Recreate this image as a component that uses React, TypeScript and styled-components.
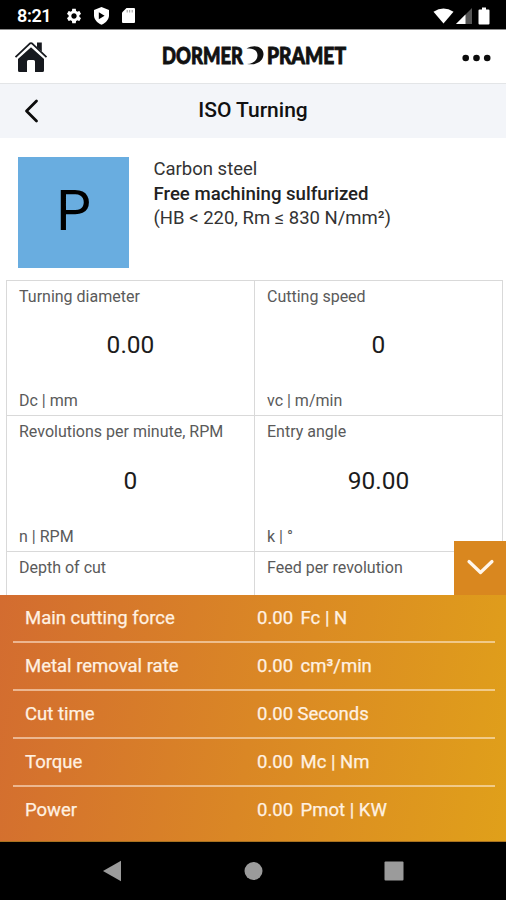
import React from 'react';
import styled, { createGlobalStyle } from 'styled-components';

const GlobalStyle = createGlobalStyle`
  *, *::before, *::after { box-sizing: border-box; }
  body { margin: 0; background: #fff; font-family: Roboto, "Liberation Sans", sans-serif; }
  svg { display: block; flex: none; overflow: visible; }
`;

const Screen = styled.div`
  width: 506px;
  height: 900px;
  display: flex;
  flex-direction: column;
  overflow: hidden;
  background: #fff;
  color: #111;
`;

const StatusBar = styled.div`
  height: 30px;
  flex: none;
  display: flex;
  align-items: center;
  justify-content: space-between;
  padding: 2px 16px 0 17px;
  background: #000;
  border-bottom: 1px solid #8c8c8c;
  color: #fff;
`;

const StatusGroup = styled.div<{ $gap: number }>`
  display: flex;
  align-items: center;
  gap: ${(p) => p.$gap}px;
`;

const Clock = styled.span`
  width: 35px;
  font-size: 18px;
  font-weight: 600;
  line-height: 22px;
  letter-spacing: -0.4px;
  margin-right: 3px;
`;

const Header = styled.header`
  height: 54px;
  flex: none;
  display: flex;
  align-items: center;
  justify-content: space-between;
  padding: 0 14px;
  border-bottom: 1px solid #e3e5e7;
`;

const TitleBar = styled.div`
  height: 54px;
  flex: none;
  display: grid;
  grid-template-columns: 60px 1fr 60px;
  align-items: center;
  padding: 0 0 1px;
  background: #f3f5f9;
`;

const BackButton = styled.div`
  padding-left: 22px;
`;

const Title = styled.h1`
  margin: 0;
  padding-bottom: 1px;
  text-align: center;
  font-size: 21px;
  font-weight: 500;
  line-height: 24px;
  color: #111;
`;

const Material = styled.section`
  height: 142px;
  flex: none;
  display: flex;
  align-items: flex-start;
  gap: 24.5px;
  padding: 19px 0 0 18px;
`;

const MaterialBadge = styled.div`
  width: 111px;
  height: 111px;
  display: flex;
  align-items: center;
  justify-content: center;
  padding-bottom: 3px;
  background: #69ade0;
  font-size: 55px;
  line-height: 56px;
  color: #000;
`;

const MaterialText = styled.div`
  display: flex;
  flex-direction: column;
`;

const MaterialLine = styled.span<{ $strong?: boolean }>`
  font-size: ${(p) => (p.$strong ? 18.6 : 18.5)}px;
  line-height: 24.5px;
  font-weight: ${(p) => (p.$strong ? 500 : 400)};
  color: ${(p) => (p.$strong ? '#222' : '#333')};
  white-space: nowrap;
`;

const Fields = styled.section`
  height: 315px;
  flex: none;
  overflow: hidden;
  display: grid;
  grid-template-columns: 248px 248px;
  grid-template-rows: 135px 136px 43px;
  width: 497px;
  margin-left: 6px;
  border-top: 1px solid #d9d9d9;
  border-left: 1px solid #d9d9d9;
`;

const FieldCell = styled.div`
  display: flex;
  flex-direction: column;
  justify-content: space-between;
  padding: 6px 12px 4px;
  border-right: 1px solid #d9d9d9;
  border-bottom: 1px solid #d9d9d9;

  &:nth-last-child(-n + 2) { border-bottom: none; }
`;

const FieldLabel = styled.span`
  font-size: 16px;
  line-height: 20px;
  color: #5a5a5a;
  white-space: nowrap;
`;

const FieldValue = styled.span`
  text-align: center;
  font-size: 24.5px;
  line-height: 30px;
  color: #1c1c1c;
  margin-bottom: 8px;
`;

const Results = styled.section`
  position: relative;
  height: 247px;
  flex: none;
  padding: 0 11px 0 13px;
  background: linear-gradient(100deg, #d36c30 0%, #da8725 50%, #e0a01a 100%);
  border-bottom: 1px solid #a87220;
`;

const CollapseButton = styled.div`
  position: absolute;
  right: 0;
  top: -54px;
  width: 52px;
  height: 54px;
  display: flex;
  align-items: center;
  justify-content: center;
  padding-bottom: 2px;
  background: #d9871f;
`;

const ResultRow = styled.div`
  height: 48px;
  display: grid;
  grid-template-columns: 232px 1fr;
  align-items: center;
  padding: 0 0 0 12px;
  border-bottom: 2px solid rgba(255, 240, 225, 0.55);
  font-size: 18.5px;
  line-height: 24px;
  color: #fff1e2;
  -webkit-text-stroke: 0.25px #fff1e2;

  &:last-child { border-bottom-color: transparent; }
`;

const Reading = styled.span<{ $gap: number }>`
  display: flex;
  gap: ${(p) => p.$gap}px;
`;

const NavBar = styled.nav`
  height: 58px;
  flex: none;
  display: flex;
  align-items: center;
  justify-content: space-between;
  padding: 0 102.5px 0 102px;
  background: #000;
`;

const GearIcon = () => (
  <svg width="18" height="18" viewBox="0 0 24 24" fill="#fff">
    <path d="M19.14 12.94c.04-.3.06-.61.06-.94s-.02-.64-.07-.94l2.03-1.58c.18-.14.23-.41.12-.61l-1.92-3.32c-.12-.22-.37-.29-.59-.22l-2.39.96c-.5-.38-1.03-.7-1.62-.94l-.36-2.54c-.04-.24-.24-.41-.48-.41h-3.84c-.24 0-.43.17-.47.41l-.36 2.54c-.59.24-1.13.57-1.62.94l-2.39-.96c-.22-.08-.47 0-.59.22L2.74 8.87c-.12.21-.08.47.12.61l2.03 1.58c-.05.3-.09.63-.09.94s.02.64.07.94l-2.03 1.58c-.18.14-.23.41-.12.61l1.92 3.32c.12.22.37.29.59.22l2.39-.96c.5.38 1.03.7 1.62.94l.36 2.54c.05.24.24.41.48.41h3.84c.24 0 .44-.17.47-.41l.36-2.54c.59-.24 1.13-.56 1.62-.94l2.39.96c.22.08.47 0 .59-.22l1.92-3.32c.12-.22.07-.47-.12-.61l-2.01-1.58zM12 15.6c-1.98 0-3.6-1.62-3.6-3.6s1.62-3.6 3.6-3.6 3.6 1.62 3.6 3.6-1.62 3.6-3.6 3.6z" />
  </svg>
);

const ShieldIcon = () => (
  <svg width="17" height="18" viewBox="0 0 17 18">
    <path d="M8.5 0 16 3v5.2c0 4-3 7.700-7.500 9.500C4 15.900 1 12.200 1 8.200V3z" fill="#fff" />
    <path d="M5.800 5.200v7l5.800-3.500z" fill="#000" />
  </svg>
);

const SdCardIcon = () => (
  <svg width="16" height="17" viewBox="-1 0 15 17">
    <path d="M5 1h7.500q1 0 1 1v13q0 1-1 1h-11q-1 0-1-1V5.500z" fill="#fff" />
    <path d="M5.700 3v2.500M8.200 3v2.500M10.700 3v2.500" stroke="#999" strokeWidth="1" />
  </svg>
);

const WifiIcon = () => (
  <svg width="21" height="16" viewBox="0 0 21 16">
    <path d="M.5 3.800Q10.500-2.800 20.500 3.800L10.500 15.500z" fill="#fff" />
  </svg>
);

const SignalIcon = () => (
  <svg width="16" height="16" viewBox="0 0 16 16">
    <path d="M16 0v16H0z" fill="#555" />
    <path d="M9.500 6.500V16H0z" fill="#fff" />
  </svg>
);

const BatteryIcon = () => (
  <svg width="16" height="18" viewBox="-4 0 16 18">
    <path d="M4 .5h4v2h2.500q1 0 1 1v13q0 1-1 1h-9q-1 0-1-1v-13q0-1 1-1H4z" fill="#fff" />
  </svg>
);

const HomeIcon = () => (
  <svg width="34" height="32" viewBox="0 0 34 32">
    <path d="M23 1.500h4.800v9L23 6.500z" fill="#16191e" />
    <path d="M4 16 17 4l13 12v13.500q0 1.500-1.500 1.500H21V20.500q0-1.500-1.500-1.500h-5q-1.500 0-1.500 1.500V31H5.500Q4 31 4 29.500z" fill="#16191e" />
    <path d="M2 17.500 17 4 32 17.500" fill="none" stroke="#fff" strokeWidth="3.400" />
    <path d="M1.500 16.200 15.500 2.800q1.500-1.300 3 0l14 13.400" fill="none" stroke="#16191e" strokeWidth="1.800" />
  </svg>
);

const Logo = () => (
  <svg
    width="190"
    height="26"
    viewBox="0 0 190 26"
    fill="#111"
    fontFamily='Lato, "Liberation Sans", sans-serif'
    fontWeight="900"
    fontSize="23"
    stroke="#111"
    strokeWidth="0.900"
  >
    <text x="3" y="20" textLength="81" lengthAdjust="spacingAndGlyphs">DORMER</text>
    <path d="M87.500 4.600C96-.7 105 3.200 104.500 10.600c-.4 7-7.500 11.200-16.500 9.300 6.500-.3 10.500-3.800 10.500-8.700 0-5-4.700-7.600-11-6.600z" stroke="none" />
    <text x="108" y="20" textLength="79" lengthAdjust="spacingAndGlyphs">PRAMET</text>
  </svg>
);

const MoreIcon = () => (
  <svg width="32" height="8" viewBox="0 0 32 8" fill="#0c0c0c">
    <circle cx="5.700" cy="5" r="3.300" />
    <circle cx="16.500" cy="5" r="3.300" />
    <circle cx="27.200" cy="5" r="3.300" />
  </svg>
);

const BackIcon = () => (
  <svg width="17" height="24" viewBox="0 0 17 24">
    <path d="M14.500 2 4.500 12l10 10" fill="none" stroke="#0c0c0c" strokeWidth="2.800" strokeLinecap="round" strokeLinejoin="round" />
  </svg>
);

const ChevronDownIcon = () => (
  <svg width="28" height="18" viewBox="0 0 28 18">
    <path d="M3 3.500 14.500 14.500 26 3.500" fill="none" stroke="#fff6ec" strokeWidth="3.200" strokeLinecap="round" strokeLinejoin="round" />
  </svg>
);

const NavBackIcon = () => (
  <svg width="20" height="22" viewBox="0 0 20 22">
    <path d="M1 11 19 .8v20.400z" fill="#9b9b9b" />
  </svg>
);

const NavHomeIcon = () => (
  <svg width="18" height="18" viewBox="0 0 18 18">
    <circle cx="9.500" cy="9" r="9" fill="#9b9b9b" />
  </svg>
);

const NavRecentIcon = () => (
  <svg width="20" height="20" viewBox="0 0 20 20">
    <rect x="0.500" y="0.500" width="19" height="19" rx="1" fill="#9b9b9b" />
  </svg>
);

const fields = [
  { label: 'Turning diameter', value: '0.00', unit: 'Dc | mm' },
  { label: 'Cutting speed', value: '0', unit: 'vc | m/min' },
  { label: 'Revolutions per minute, RPM', value: '0', unit: 'n | RPM' },
  { label: 'Entry angle', value: '90.00', unit: 'k | °' },
  { label: 'Depth of cut' },
  { label: 'Feed per revolution' },
];

const results = [
  { label: 'Main cutting force', value: '0.00', unit: 'Fc | N', gap: 7.5 },
  { label: 'Metal removal rate', value: '0.00', unit: 'cm³/min', gap: 7.5 },
  { label: 'Cut time', value: '0.00', unit: 'Seconds', gap: 4.5 },
  { label: 'Torque', value: '0.00', unit: 'Mc | Nm', gap: 7.5 },
  { label: 'Power', value: '0.00', unit: 'Pmot | KW', gap: 7.5 },
];

export default function App() {
  return (
    <Screen>
      <GlobalStyle />
      <StatusBar>
        <StatusGroup $gap={10}>
          <Clock>8:21</Clock>
          <GearIcon />
          <ShieldIcon />
          <SdCardIcon />
        </StatusGroup>
        <StatusGroup $gap={2}>
          <WifiIcon />
          <SignalIcon />
          <BatteryIcon />
        </StatusGroup>
      </StatusBar>
      <Header>
        <HomeIcon />
        <Logo />
        <MoreIcon />
      </Header>
      <TitleBar>
        <BackButton>
          <BackIcon />
        </BackButton>
        <Title>ISO Turning</Title>
      </TitleBar>
      <Material>
        <MaterialBadge>P</MaterialBadge>
        <MaterialText>
          <MaterialLine>Carbon steel</MaterialLine>
          <MaterialLine $strong>Free machining sulfurized</MaterialLine>
          <MaterialLine>(HB &lt; 220, Rm ≤ 830 N/mm²)</MaterialLine>
        </MaterialText>
      </Material>
      <Fields>
        {fields.map((f) => (
          <FieldCell key={f.label}>
            <FieldLabel>{f.label}</FieldLabel>
            {f.value && <FieldValue>{f.value}</FieldValue>}
            {f.unit && <FieldLabel>{f.unit}</FieldLabel>}
          </FieldCell>
        ))}
      </Fields>
      <Results>
        <CollapseButton>
          <ChevronDownIcon />
        </CollapseButton>
        {results.map((r) => (
          <ResultRow key={r.label}>
            <span>{r.label}</span>
            <Reading $gap={r.gap}>
              <span>{r.value}</span>
              <span>{r.unit}</span>
            </Reading>
          </ResultRow>
        ))}
      </Results>
      <NavBar>
        <NavBackIcon />
        <NavHomeIcon />
        <NavRecentIcon />
      </NavBar>
    </Screen>
  );
}
